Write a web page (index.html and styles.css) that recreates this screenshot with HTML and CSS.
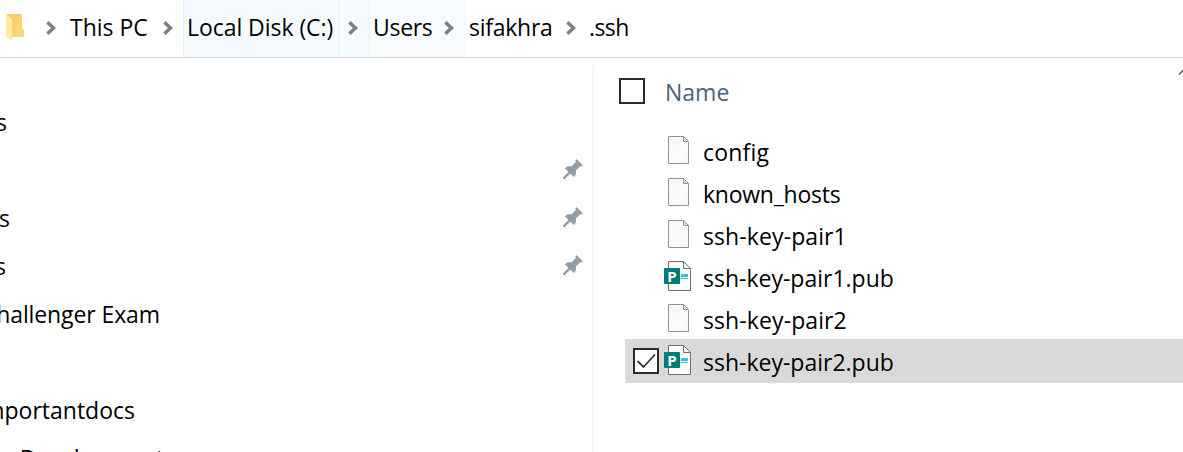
FILE: index.html
```
<!DOCTYPE html>
<html lang="en">
<head>
<meta charset="utf-8">
<title>.ssh</title>
<link rel="stylesheet" href="styles.css">
</head>
<body>
<svg class="defs" width="0" height="0" aria-hidden="true">
  <defs>
    <linearGradient id="paper" x1="0" y1="0" x2="1" y2="1"><stop offset="0" stop-color="#f3f5f7"/><stop offset=".6" stop-color="#fafbfc"/><stop offset="1" stop-color="#f3f5f7"/></linearGradient>
    <linearGradient id="gold" x1="0" y1="0" x2="1" y2="1"><stop offset="0" stop-color="#f0ca62"/><stop offset="1" stop-color="#fbdc7c"/></linearGradient>
    <symbol id="chevron" viewBox="0 0 10 16"><path d="M1.4 2.2 7.4 8 1.4 13.8" fill="none" stroke="#808080" stroke-width="3.6"/></symbol>
    <symbol id="pin" viewBox="0 0 20 20"><path d="M13.5 0 20 6.3 18.5 7.3 17.2 7.2 13 11.3 12.8 15.5 11 18 7.3 14.7 1.5 20 0 20 0 18.7 5.3 12.8 2 9.2 4.5 7.3 8.7 7.2 12.8 3 12.5 1.3z" fill="#939ea4"/></symbol>
    <symbol id="file" viewBox="0 0 22 28"><path d="M.5.5h15l5 5v22H.5z" fill="url(#paper)" stroke="#949494"/><path d="M15.5.5v5h5z" fill="#e4e6e8" stroke="#949494"/></symbol>
    <symbol id="publisher" viewBox="0 0 28 30"><path d="M4.5.5h15l7 7v22h-22z" fill="#fbfbfb" stroke="#6f6f6f"/><path d="M19.5.5v7h7z" fill="#fff" stroke="#6f6f6f"/><path d="M17 13h7v3h-7zM17 17h7v1h-7z" fill="#35c4d2"/><rect y="7" width="16" height="16" rx=".7" fill="#037a7a"/></symbol>
  </defs>
</svg>
<nav class="address">
  <svg class="folder" width="19" height="28" viewBox="0 0 19 28"><path d="M0 0h16v14l2 2v7H4z" fill="url(#gold)"/><path d="M0 0 6 5v22L0 23z" fill="#ffe9a3"/></svg>
  <svg class="sep sep-first"><use href="#chevron"/></svg>
  <span class="crumb pc">This PC</span>
  <svg class="sep"><use href="#chevron"/></svg>
  <span class="crumb disk">Local Disk (C:)</span>
  <span class="arrow"><svg class="sep"><use href="#chevron"/></svg></span>
  <span class="crumb users">Users</span>
  <span class="arrow users-arrow"><svg class="sep"><use href="#chevron"/></svg></span>
  <span class="crumb owner">sifakhra</span>
  <svg class="sep"><use href="#chevron"/></svg>
  <span class="crumb current">.ssh</span>
</nav>
<main class="content">
  <aside class="sidebar">
    <div class="link"><span class="label l1">s</span></div>
    <div class="link"><svg class="pin"><use href="#pin"/></svg></div>
    <div class="link"><span class="label l2">s</span><svg class="pin"><use href="#pin"/></svg></div>
    <div class="link"><span class="label l3">s</span><svg class="pin"><use href="#pin"/></svg></div>
    <div class="link"><span class="label l4">hallenger Exam</span></div>
    <div class="link"></div>
    <div class="link"><span class="label l5">mportantdocs</span></div>
    <div class="link last"><span class="label l6">r Development</span></div>
  </aside>
  <section class="files">
    <header class="head"><span class="box"></span><span class="title">Name</span><svg class="sort" width="6" height="8" viewBox="0 0 6 8"><path d="M2 6.5 8 .5" fill="none" stroke="#555" stroke-width="1.3"/></svg></header>
    <div class="row"><span class="icon"><svg class="file"><use href="#file"/></svg></span><span class="name n1">config</span></div>
    <div class="row"><span class="icon"><svg class="file"><use href="#file"/></svg></span><span class="name n2">known_hosts</span></div>
    <div class="row"><span class="icon"><svg class="file"><use href="#file"/></svg></span><span class="name n3">ssh-key-pair1</span></div>
    <div class="row"><span class="icon"><svg class="pub"><use href="#publisher"/></svg><b class="badge">P</b></span><span class="name">ssh-key-pair1.pub</span></div>
    <div class="row"><span class="icon"><svg class="file"><use href="#file"/></svg></span><span class="name n3">ssh-key-pair2</span></div>
    <div class="row selected"><span class="box"><svg width="22" height="22" viewBox="0 0 22 22"><path d="m2.5 11 6 6L20 4.5" fill="none" stroke="#333" stroke-width="1.8"/></svg></span><span class="icon"><svg class="pub"><use href="#publisher"/></svg><b class="badge">P</b></span><span class="name">ssh-key-pair2.pub</span></div>
  </section>
</main>
</body>
</html>
```
FILE: styles.css
```
* { box-sizing: border-box; }
body {
  margin: 0;
  width: 1183px;
  height: 452px;
  overflow: hidden;
  background: #fff;
  color: #000;
  font: 23px/32px "Open Sans", "Noto Sans", sans-serif;
  white-space: nowrap;
}
svg { display: block; flex: none; }
.defs { position: absolute; }
.address {
  display: flex;
  align-items: center;
  height: 58px;
  border-bottom: 1px solid #d5d5d5;
}
.folder { margin: -2px 0 0 6px; }
.sep { width: 10px; height: 16px; margin-top: -2px; }
.sep-first { margin-left: 21px; }
.crumb, .arrow {
  display: flex;
  align-items: center;
  flex: none;
  height: 57px;
}
.crumb { padding-bottom: 3px; }
.pc { width: 107px; padding-left: 14px; }
.disk {
  width: 155px;
  margin-left: 10px;
  padding-left: 3px;
  background: #f5faff;
  border-left: 1px solid #e5f3fd;
  letter-spacing: -.05px;
}
.arrow {
  width: 32px;
  padding-left: 9px;
  background: #f5faff;
  border: 1px solid #e5f3fd;
  border-width: 0 1px;
}
.users { width: 65px; padding-left: 3px; background: #f9fcff; letter-spacing: -.3px; }
.users-arrow { width: 31px; background: #f9fcff; border: 0; }
.owner { width: 100px; padding-left: 3px; letter-spacing: -.25px; }
.current { padding-left: 13px; letter-spacing: -.6px; }
.content { display: flex; height: 394px; overflow: hidden; }
.sidebar { width: 594px; padding-top: 40px; flex: none; position: relative; }
.sidebar::after {
  content: "";
  position: absolute;
  inset: 7px 0 0 auto;
  width: 2px;
  background: #f5f5f5;
}
.link { display: flex; align-items: center; height: 48px; }
.label { display: flex; justify-content: flex-end; flex: none; }
.l1 { width: 7px; }
.l2 { width: 10px; }
.l3 { width: 6px; }
.l4 { width: 160px; letter-spacing: -.1px; }
.l5 { width: 135px; }
.l6 { width: 164px; white-space: pre; }
.pin { width: 20px; height: 20px; margin: -3px 11px 0 auto; }
.files { flex: 1; padding-left: 31px; }
.head { display: flex; height: 72px; padding-top: 20px; margin-left: -6px; }
.box {
  width: 26px;
  height: 26px;
  flex: none;
  border: 2px solid #2b2b2b;
  background: #fff;
}
.title { margin: -2px 0 0 20px; color: #4c607a; }
.sort { margin: -10px 0 0 auto; }
.row { display: flex; align-items: center; height: 42px; }
.icon {
  position: relative;
  display: flex;
  justify-content: center;
  width: 28px;
  margin: -3px 11px 0 39px;
  flex: none;
}
.file { width: 22px; height: 28px; margin-left: 2px; }
.pub { width: 28px; height: 30px; }
.badge {
  position: absolute;
  left: 0;
  top: 7px;
  width: 16px;
  color: #fff;
  font-size: 15px;
  line-height: 16px;
  text-align: center;
}
.name { padding-top: 1px; }
.n1 { letter-spacing: .2px; }
.n2 { letter-spacing: -.25px; }
.n3 { letter-spacing: .1px; }
.selected { height: 44px; margin-top: -1px; padding-left: 8px; background: #d9d9d9; }
.selected .icon { margin-left: 5px; }
```
